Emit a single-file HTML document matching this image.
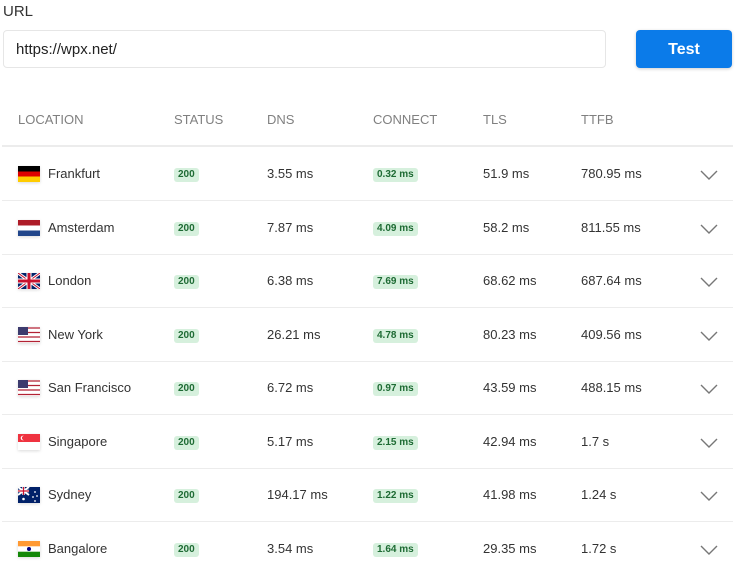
<!DOCTYPE html>
<html><head><meta charset="utf-8"><style>
*{margin:0;padding:0;box-sizing:border-box}
body{width:738px;height:574px;background:#fff;font-family:"Liberation Sans",sans-serif;color:#333;position:relative;overflow:hidden}
.a{position:absolute}
.lbl{left:3px;top:3px;font-size:15px;color:#333}
.inp{left:3px;top:30px;width:603px;height:38px;border:1px solid #e6e6e6;border-radius:4px;font-size:15px;padding:10px 12px;color:#222}
.btn{left:636px;top:30px;width:96px;height:38px;background:#0b7be9;border-radius:4px;color:#fff;font-weight:bold;font-size:16px;text-align:center;line-height:39px;box-shadow:0 1px 3px rgba(0,0,0,.2)}
.hd{top:112px;font-size:13px;color:#808080}
.hl{left:2px;top:145px;width:731px;height:2px;background:#ececec}
.row{left:0;width:738px;height:54px}
.row .c{position:absolute;top:0;line-height:54px;font-size:13px;color:#333}
.dv{position:absolute;left:2px;width:731px;height:1px;background:#ececec;bottom:0}
.b{display:inline-block;background:#d6f0dd;color:#1e6b34;font-weight:bold;font-size:10px;line-height:14px;padding:0 4px;border-radius:3px;vertical-align:middle}
.f{position:absolute;left:18px;top:19px;width:22px;height:16px;box-shadow:0 1px 3px rgba(0,0,0,.15)}
.ch{position:absolute;left:700px;top:23px}
</style></head><body>
<div class="a lbl">URL</div>
<div class="a inp">https://wpx.net/</div>
<div class="a btn">Test</div>
<div class="a hd" style="left:18px">LOCATION</div>
<div class="a hd" style="left:174px">STATUS</div>
<div class="a hd" style="left:267px">DNS</div>
<div class="a hd" style="left:373px">CONNECT</div>
<div class="a hd" style="left:483px">TLS</div>
<div class="a hd" style="left:581px">TTFB</div>
<div class="a hl"></div>

<div class="a row" style="top:147px">
<div class="f" style="background:linear-gradient(#000 33%,#d00 33% 66%,#fc0 66%)"></div>
<div class="c" style="left:48px">Frankfurt</div><div class="c" style="left:174px"><span class="b">200</span></div><div class="c" style="left:267px">3.55 ms</div><div class="c" style="left:373px"><span class="b">0.32 ms</span></div><div class="c" style="left:483px">51.9 ms</div><div class="c" style="left:581px">780.95 ms</div>
<svg class="ch" width="18" height="10"><path d="M1 1l8 8 8-8" fill="none" stroke="#777" stroke-width="1.4"/></svg><div class="dv"></div></div>

<div class="a row" style="top:201px">
<div class="f" style="background:linear-gradient(#ae1c28 33%,#fff 33% 66%,#21468b 66%)"></div>
<div class="c" style="left:48px">Amsterdam</div><div class="c" style="left:174px"><span class="b">200</span></div><div class="c" style="left:267px">7.87 ms</div><div class="c" style="left:373px"><span class="b">4.09 ms</span></div><div class="c" style="left:483px">58.2 ms</div><div class="c" style="left:581px">811.55 ms</div>
<svg class="ch" width="18" height="10"><path d="M1 1l8 8 8-8" fill="none" stroke="#777" stroke-width="1.4"/></svg><div class="dv"></div></div>

<div class="a row" style="top:254px">
<svg class="f" viewBox="0 0 22 16"><rect width="22" height="16" fill="#012169"/><path d="M0 0L22 16M22 0L0 16" stroke="#fff" stroke-width="3"/><path d="M0 0L22 16M22 0L0 16" stroke="#c8102e" stroke-width="1"/><path d="M11 0V16M0 8H22" stroke="#fff" stroke-width="5"/><path d="M11 0V16M0 8H22" stroke="#c8102e" stroke-width="3"/></svg>
<div class="c" style="left:48px">London</div><div class="c" style="left:174px"><span class="b">200</span></div><div class="c" style="left:267px">6.38 ms</div><div class="c" style="left:373px"><span class="b">7.69 ms</span></div><div class="c" style="left:483px">68.62 ms</div><div class="c" style="left:581px">687.64 ms</div>
<svg class="ch" width="18" height="10"><path d="M1 1l8 8 8-8" fill="none" stroke="#777" stroke-width="1.4"/></svg><div class="dv"></div></div>

<div class="a row" style="top:308px">
<svg class="f" viewBox="0 0 22 16"><rect width="22" height="16" fill="#fff"/><path d="M0 1H22M0 5.5H22M0 10H22M0 14.5H22" stroke="#b22234" stroke-width="1.3"/><rect width="10" height="8" fill="#3c3b6e"/></svg>
<div class="c" style="left:48px">New York</div><div class="c" style="left:174px"><span class="b">200</span></div><div class="c" style="left:267px">26.21 ms</div><div class="c" style="left:373px"><span class="b">4.78 ms</span></div><div class="c" style="left:483px">80.23 ms</div><div class="c" style="left:581px">409.56 ms</div>
<svg class="ch" width="18" height="10"><path d="M1 1l8 8 8-8" fill="none" stroke="#777" stroke-width="1.4"/></svg><div class="dv"></div></div>

<div class="a row" style="top:361px">
<svg class="f" viewBox="0 0 22 16"><rect width="22" height="16" fill="#fff"/><path d="M0 1H22M0 5.5H22M0 10H22M0 14.5H22" stroke="#b22234" stroke-width="1.3"/><rect width="10" height="8" fill="#3c3b6e"/></svg>
<div class="c" style="left:48px">San Francisco</div><div class="c" style="left:174px"><span class="b">200</span></div><div class="c" style="left:267px">6.72 ms</div><div class="c" style="left:373px"><span class="b">0.97 ms</span></div><div class="c" style="left:483px">43.59 ms</div><div class="c" style="left:581px">488.15 ms</div>
<svg class="ch" width="18" height="10"><path d="M1 1l8 8 8-8" fill="none" stroke="#777" stroke-width="1.4"/></svg><div class="dv"></div></div>

<div class="a row" style="top:415px">
<svg class="f" viewBox="0 0 22 16"><rect width="22" height="16" fill="#fff"/><rect width="22" height="8" fill="#ef3340"/><circle cx="5" cy="4" r="2.3" fill="#fff"/><circle cx="6" cy="4" r="2.1" fill="#ef3340"/></svg>
<div class="c" style="left:48px">Singapore</div><div class="c" style="left:174px"><span class="b">200</span></div><div class="c" style="left:267px">5.17 ms</div><div class="c" style="left:373px"><span class="b">2.15 ms</span></div><div class="c" style="left:483px">42.94 ms</div><div class="c" style="left:581px">1.7 s</div>
<svg class="ch" width="18" height="10"><path d="M1 1l8 8 8-8" fill="none" stroke="#777" stroke-width="1.4"/></svg><div class="dv"></div></div>

<div class="a row" style="top:468px">
<svg class="f" viewBox="0 0 22 16"><rect width="22" height="16" fill="#012169"/><path d="M0 0L11 8M11 0L0 8" stroke="#fff" stroke-width="2"/><path d="M5.5 0V8M0 4H11" stroke="#fff" stroke-width="2.5"/><path d="M5.5 0V8M0 4H11" stroke="#c8102e" stroke-width="1.2"/><circle cx="5.5" cy="12" r="1.3" fill="#fff"/><circle cx="17" cy="5" r=".9" fill="#fff"/><circle cx="15" cy="10" r=".9" fill="#fff"/><circle cx="19" cy="9" r=".9" fill="#fff"/><circle cx="17" cy="14" r=".9" fill="#fff"/></svg>
<div class="c" style="left:48px">Sydney</div><div class="c" style="left:174px"><span class="b">200</span></div><div class="c" style="left:267px">194.17 ms</div><div class="c" style="left:373px"><span class="b">1.22 ms</span></div><div class="c" style="left:483px">41.98 ms</div><div class="c" style="left:581px">1.24 s</div>
<svg class="ch" width="18" height="10"><path d="M1 1l8 8 8-8" fill="none" stroke="#777" stroke-width="1.4"/></svg><div class="dv"></div></div>

<div class="a row" style="top:522px">
<svg class="f" viewBox="0 0 22 16"><rect width="22" height="16" fill="#fff"/><rect width="22" height="5.3" fill="#f93"/><rect y="10.7" width="22" height="5.3" fill="#138808"/><circle cx="11" cy="8" r="2" fill="#000080"/></svg>
<div class="c" style="left:48px">Bangalore</div><div class="c" style="left:174px"><span class="b">200</span></div><div class="c" style="left:267px">3.54 ms</div><div class="c" style="left:373px"><span class="b">1.64 ms</span></div><div class="c" style="left:483px">29.35 ms</div><div class="c" style="left:581px">1.72 s</div>
<svg class="ch" width="18" height="10"><path d="M1 1l8 8 8-8" fill="none" stroke="#777" stroke-width="1.4"/></svg></div>
</body></html>
